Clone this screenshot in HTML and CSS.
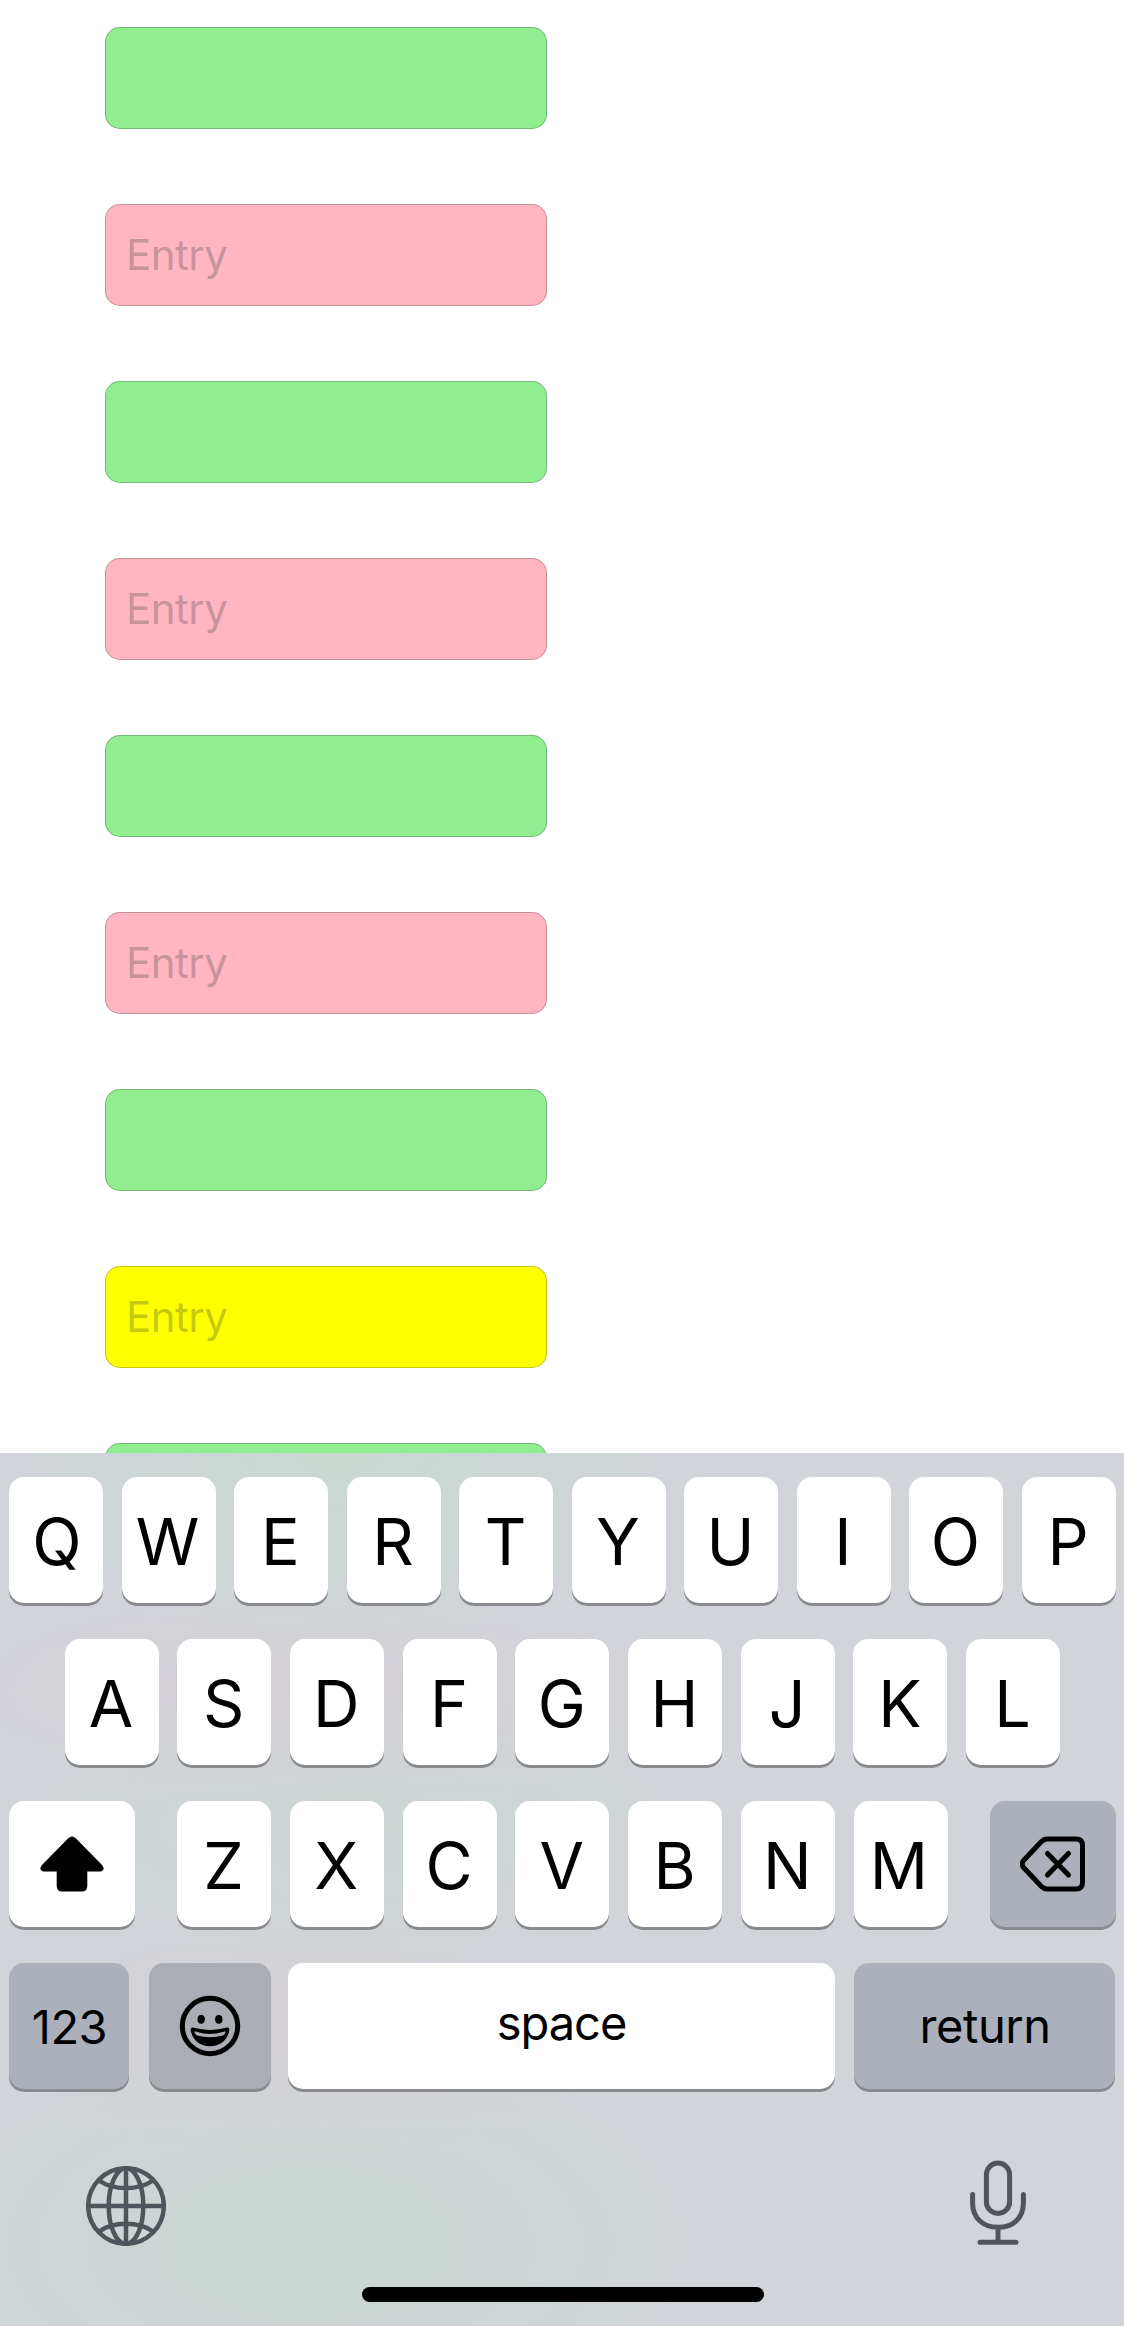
FILE: index.html
```
<!DOCTYPE html>
<html lang="en">
<head>
<meta charset="utf-8">
<title>Entries</title>
<link rel="stylesheet" href="styles.css">
</head>
<body>
<main class="screen">
  <section class="fields">
    <div class="field green"></div>
    <div class="field pink">Entry</div>
    <div class="field green"></div>
    <div class="field pink">Entry</div>
    <div class="field green"></div>
    <div class="field pink">Entry</div>
    <div class="field green"></div>
    <div class="field yellow">Entry</div>
    <div class="field green"></div>
  </section>
  <section class="keyboard">
    <div class="row">
      <div class="key q">Q</div><div class="key w">W</div><div class="key">E</div><div class="key">R</div><div class="key">T</div><div class="key">Y</div><div class="key">U</div><div class="key">I</div><div class="key">O</div><div class="key">P</div>
    </div>
    <div class="row row-home">
      <div class="key">A</div><div class="key">S</div><div class="key">D</div><div class="key">F</div><div class="key">G</div><div class="key">H</div><div class="key">J</div><div class="key">K</div><div class="key">L</div>
    </div>
    <div class="row">
      <div class="key wide">
        <svg width="64" height="56" viewBox="0 0 64 56"><path d="M28.200 2.200Q32 -1.200 35.800 2.200L62 29C65 32.500 63.500 35.500 60 35.500H47.300V50Q47.300 55.500 41.800 55.500H22.200Q16.700 55.500 16.700 50V35.500H4C.5 35.500 -1 32.500 2 29Z"/></svg>
      </div>
      <div class="letters">
        <div class="key">Z</div><div class="key">X</div><div class="key">C</div><div class="key">V</div><div class="key">B</div><div class="key">N</div><div class="key m">M</div>
      </div>
      <div class="key wide dark">
        <svg class="line" width="66" height="56" viewBox="0 0 66 56"><path d="M27 3H56Q62.500 3 62.500 9.500V46.500Q62.500 53 56 53H27Q24 53 21.500 50.500L3.500 31.500Q1 28 3.500 24.500L21.500 5.500Q24 3 27 3Z"/><path d="M27.500 17.500L48.500 39M48.500 17.500L27.500 39"/></svg>
      </div>
    </div>
    <div class="row row-bottom">
      <div class="key dark numbers">123</div>
      <div class="key dark emoji">
        <svg width="62" height="62" viewBox="0 0 62 62"><circle class="ring" cx="31" cy="31" r="27.700"/><ellipse cx="22.200" cy="24.300" rx="3.700" ry="4.400"/><ellipse cx="39.800" cy="24.300" rx="3.700" ry="4.400"/><path fill-rule="evenodd" d="M14 32.600Q31 37.500 48 32.600Q51 32.300 50.200 36C48 45.500 41 51.300 31 51.300S14 45.500 11.800 36Q11 32.300 14 32.600ZM15.500 36.300Q15.700 39.700 18 40.600Q31 44 44 40.600Q46.300 39.700 46.500 36.300Q31 41.500 15.500 36.300Z"/></svg>
      </div>
      <div class="key space">space</div>
      <div class="key dark return">return</div>
    </div>
    <div class="tools">
      <svg class="globe" width="80" height="80" viewBox="0 0 80 80"><circle cx="40" cy="40" r="37.800"/><ellipse cx="40" cy="40" rx="17.300" ry="37.800"/><path d="M40 2V78M2 40H78M13 14.500Q24 22.200 40 22.200T67 14.500M13 65.500Q24 57.800 40 57.800T67 65.500"/></svg>
      <svg class="mic" width="56" height="86" viewBox="0 0 56 86"><rect x="16.400" y="3" width="23.200" height="50.500" rx="11.600"/><path d="M2.600 34.500V43C2.600 58 13 67.300 28 67.300S53.400 58 53.400 43V34.500M28 67.500V82M10 82.300H46"/></svg>
    </div>
    <div class="home"></div>
  </section>
</main>
</body>
</html>
```
FILE: styles.css
```
* { box-sizing: border-box; }
body { margin: 0; background: #fff; font-family: Inter, "Liberation Sans", sans-serif; }
.screen { width: 1124px; height: 2326px; overflow: hidden; display: flex; flex-direction: column; }
.fields { height: 1453px; flex: none; overflow: hidden; padding: 27px 0 0 105px; display: flex; flex-direction: column; gap: 75px; }
.field { flex: none; width: 442px; height: 102px; border: 1px solid rgba(60, 60, 67, .3); border-radius: 15px; padding: 0 0 0 20px; font-size: 42px; line-height: 100px; letter-spacing: -.5px; color: rgba(60, 60, 67, .3); }
.green { background: #90ee90; }
.pink { background: #ffb6c1; }
.yellow { background: #ff0; }
.keyboard {
  flex: none; height: 873px; padding: 24px 8.500px 0 9px; display: flex; flex-direction: column; gap: 36px;
  background:
    radial-gradient(ellipse 340px 200px at 340px 0, #cad8d1, rgba(202, 216, 209, 0)),
    radial-gradient(ellipse 420px 120px at 290px 235px, #d4d0d6, rgba(212, 208, 214, 0)),
    radial-gradient(ellipse 380px 140px at 350px 375px, #ccd6d3, rgba(204, 214, 211, 0)),
    radial-gradient(ellipse 360px 130px at 300px 575px, #d4d0d5, rgba(212, 208, 213, 0)),
    radial-gradient(ellipse 420px 220px at 310px 790px, #ccd6d3 30%, rgba(204, 214, 211, 0)),
    #d1d4d9;
}
.row { display: flex; justify-content: space-between; height: 126px; flex: none; }
.row-home { padding: 0 55.500px; }
.letters { display: flex; justify-content: space-between; width: 770.500px; }
.key { width: 94px; height: 126px; border-radius: 15px; background: #fff; box-shadow: 0 3px 0 #898a8d; color: #000; font-size: 64.500px; display: flex; align-items: center; justify-content: center; padding: 3px 1px 0 0; }
.q { padding: 3px 0 0 2px; }
.w, .m { padding-right: 3px; }
.w { letter-spacing: -1px; }
.wide { width: 126px; padding: 0; }
.dark { background: #abb0ba; }
.row-bottom { justify-content: flex-start; }
.numbers, .space, .return { font-size: 47px; }
.numbers { width: 120px; padding: 0 0 0 1px; letter-spacing: -.5px; }
.emoji { width: 122.500px; margin-left: 19.700px; padding: 0; background: #abadb4; }
.space { width: 547px; margin-left: 16.800px; padding: 0 0 8px; letter-spacing: -1px; }
.return { width: 261.500px; margin-left: 18.800px; padding: 0 0 2px 1px; letter-spacing: -.4px; }
.line { fill: none; stroke: #000; stroke-width: 5; stroke-linecap: round; stroke-linejoin: round; }
.ring { fill: none; stroke: #000; stroke-width: 5; }
.tools { height: 87px; flex: none; margin-top: 35px; padding: 0 90px 0 77px; display: flex; justify-content: space-between; align-items: flex-start; fill: none; stroke: #50555b; stroke-width: 5; stroke-linecap: round; }
.globe { margin-top: 6px; stroke-width: 4.500; }
.home { width: 402px; height: 15px; border-radius: 8px; background: #000; margin: 4px 0 0 353px; flex: none; }
```
